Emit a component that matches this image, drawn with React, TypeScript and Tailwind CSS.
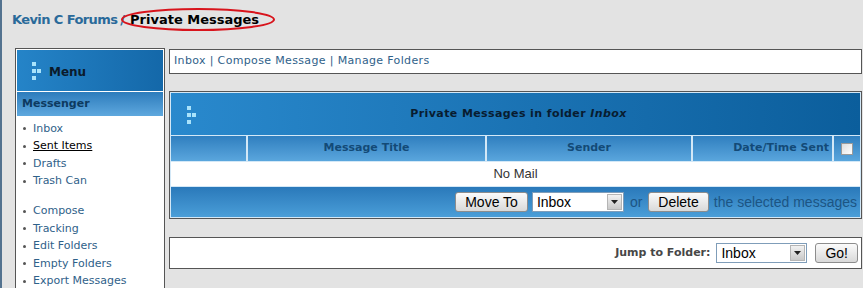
import React from 'react';

const verdana = { fontFamily: '"DejaVu Sans", Verdana, sans-serif' };
const arial = { fontFamily: '"Liberation Sans", Arial, sans-serif' };

// little 4-square block mark used in the blue headers
const Dots = () => (
    <svg width="10" height="18" viewBox="0 0 10 18" className="shrink-0">
        <rect x="0" y="0" width="4" height="4" fill="#a9e3fb" />
        <rect x="0" y="7" width="4" height="4" fill="#a9e3fb" />
        <rect x="5" y="7" width="4" height="4" fill="#a9e3fb" />
        <rect x="0" y="14" width="4" height="4" fill="#a9e3fb" />
    </svg>
);

const Button = ({ label, className = '' }: { label: string; className?: string }) => (
    <button
        className={`h-[20px] rounded-[3px] border border-[#8d8d8d] bg-linear-to-b from-[#fbfbfb] to-[#d9d9d9] px-[9px] text-[14px] leading-none text-black ${className}`}
        style={arial}
    >
        {label}
    </button>
);

const Select = ({ width }: { width: string }) => (
    <div className={`flex h-[20px] items-center border border-[#7f9db9] bg-white ${width}`} style={arial}>
        <span className="flex-1 pl-[4px] text-[14px] leading-none text-black">Inbox</span>
        <span className="mr-px flex h-[16px] w-[15px] items-center justify-center border border-[#b5b5b5] bg-linear-to-b from-[#f2f2f2] to-[#c9c9c9]">
            <svg width="7" height="4" viewBox="0 0 7 4">
                <path d="M0 0h7L3.5 4z" fill="#222" />
            </svg>
        </span>
    </div>
);

const menuTop = ['Inbox', 'Sent Items', 'Drafts', 'Trash Can'];
const menuBottom = ['Compose', 'Tracking', 'Edit Folders', 'Empty Folders', 'Export Messages'];

const MenuItem = ({ label }: { label: string }) => (
    <li className="flex h-[17.5px] items-center">
        <span className="ml-[5px] mr-[7px] h-[3px] w-[3px] rounded-full bg-[#555]" />
        <span className={label === 'Sent Items' ? 'text-black underline' : 'text-[#2f6189]'}>{label}</span>
    </li>
);

const Sidebar = () => (
    <div className="w-[150px] shrink-0 self-start border border-[#555] bg-white p-px" style={verdana}>
        <div className="flex h-[41px] items-center gap-[7px] bg-linear-to-r from-[#2584c8] to-[#1468a9] pl-[15px]">
            <Dots />
            <span className="pt-[2px] text-[12px] font-bold text-[#0b1b2c]">Menu</span>
        </div>
        <div className="mt-px flex h-[24px] items-center bg-linear-to-b from-[#2c7cbc] to-[#5ea8de] pl-[5px] text-[11px] font-bold text-[#0d3a60]">
            Messenger
        </div>
        <ul className="pb-[20px] pl-px pt-[4px] text-[11px]">
            {menuTop.map((m) => (
                <MenuItem key={m} label={m} />
            ))}
            <li className="h-[12.5px]" />
            {menuBottom.map((m) => (
                <MenuItem key={m} label={m} />
            ))}
        </ul>
    </div>
);

const MessageTable = () => (
    <div className="flex flex-col gap-px border border-[#555] bg-[#d3e8f7] p-px" style={verdana}>
        <div className="relative flex h-[42px] items-center justify-center bg-linear-to-r from-[#2989cd] to-[#0b5e9c]">
            <span className="absolute left-[16px] top-[13px]">
                <Dots />
            </span>
            <span className="pl-[6px] text-[11px] font-bold tracking-[0.4px] text-[#081c30]">
                Private Messages in folder <i>Inbox</i>
            </span>
        </div>
        <div className="grid h-[25px] grid-cols-[75px_237px_204px_139px_1fr] gap-[2px] text-[11px] font-bold text-[#134a77]">
            <div className="bg-linear-to-b from-[#2f7fbf] to-[#5aa6dd]" />
            <div className="flex items-center justify-center bg-linear-to-b from-[#2f7fbf] to-[#5aa6dd]">Message Title</div>
            <div className="flex items-center justify-center bg-linear-to-b from-[#2f7fbf] to-[#5aa6dd]">Sender</div>
            <div className="flex items-center justify-end bg-linear-to-b from-[#2f7fbf] to-[#5aa6dd] pr-[3px]">Date/Time Sent</div>
            <div className="flex items-center justify-center bg-linear-to-b from-[#2f7fbf] to-[#5aa6dd]">
                <span className="h-[12px] w-[12px] border border-[#9a9a9a] bg-linear-to-br from-[#dedede] to-white" />
            </div>
        </div>
        <div className="flex h-[24px] items-center justify-center bg-white text-[13px] text-[#333]" style={arial}>
            No Mail
        </div>
        <div className="flex h-[30px] items-center justify-end gap-[4px] bg-linear-to-b from-[#2a79ba] to-[#4a9ed8] pr-[3px]" style={arial}>
            <Button label="Move To" />
            <Select width="w-[92px]" />
            <span className="px-[2px] text-[14px] text-[#1c5584]">or</span>
            <Button label="Delete" />
            <span className="pl-px text-[14px] text-[#1c5584]">the selected messages</span>
        </div>
    </div>
);

export default function App() {
    return (
        <div className="h-[288px] overflow-hidden border-l-2 border-[#53728f] bg-[#e3e3e3]" style={verdana}>
            <div className="relative flex h-[49px] items-start pl-[10px] pt-[10px] text-[13px] font-bold">
                <span className="tracking-[-0.6px] text-[#2a6a9a]">Kevin C Forums</span>
                <span className="ml-[3px] text-[#2a6a9a]">/</span>
                <span className="ml-[5px] text-black">Private Messages</span>
                <svg className="absolute left-[118px] top-[7px]" width="156" height="25" viewBox="0 0 156 25">
                    <ellipse cx="78" cy="12.5" rx="76" ry="10.5" fill="none" stroke="#d8141c" strokeWidth="2" />
                </svg>
            </div>
            <div className="-mt-px flex gap-[4px] pl-[13px] pr-px">
                <Sidebar />
                <div className="flex flex-1 flex-col pt-px">
                    <div className="flex h-[25px] items-center border border-[#555] bg-white pl-[4px] text-[11px] tracking-[0.35px] text-[#2f6189]">
                        Inbox | Compose Message | Manage Folders
                    </div>
                    <div className="mt-[17px]">
                        <MessageTable />
                    </div>
                    <div className="mt-[18px] flex h-[32px] items-center justify-end gap-[6px] border border-[#555] bg-white pr-[3px]">
                        <span className="text-[11px] font-bold text-[#474747]">Jump to Folder:</span>
                        <Select width="w-[91px]" />
                        <Button label="Go!" className="ml-[2px]" />
                    </div>
                </div>
            </div>
        </div>
    );
}
